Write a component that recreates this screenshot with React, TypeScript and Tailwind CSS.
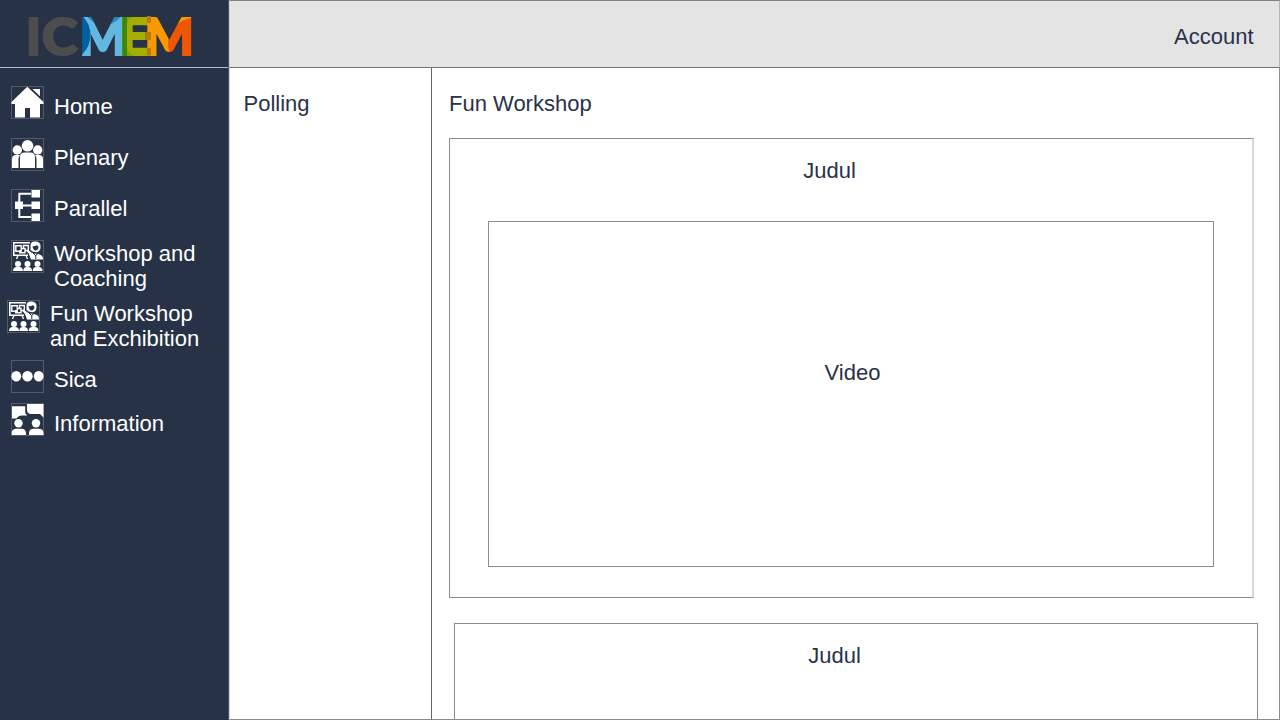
import type { ReactNode } from "react";

function Logo() {
  return (
    <svg width="228" height="67" viewBox="0 0 228 67" className="block" fontFamily="Lato, sans-serif" fontWeight="900" fontSize="52" strokeWidth="2.200" strokeLinejoin="miter">
      <defs>
        <pattern id="blue" patternUnits="userSpaceOnUse" x="0" y="0" width="228" height="67">
          <rect width="228" height="67" fill="#62b8df" />
          <circle cx="104" cy="4" r="21" fill="#2784bd" />
          <circle cx="64" cy="35" r="26.500" fill="#0062a3" />
        </pattern>
        <pattern id="green" patternUnits="userSpaceOnUse" x="0" y="0" width="228" height="67">
          <rect width="228" height="67" fill="#a4ad00" />
          <rect x="121" width="6" height="67" fill="#3f8703" />
          <path d="M127 16h7q-7 3 -7 9zM127 56h7q-7-3-7-9z" fill="#78a510" />
        </pattern>
        <pattern id="orange" patternUnits="userSpaceOnUse" x="0" y="0" width="228" height="67">
          <rect width="228" height="67" fill="#fa9800" />
          <circle cx="194" cy="44" r="26" fill="#ef5600" />
        </pattern>
      </defs>
      <text x="26" y="54.500" textLength="15" lengthAdjust="spacingAndGlyphs" fill="#4d4d4d" stroke="#4d4d4d">I</text>
      <text x="42" y="54.500" textLength="35.500" lengthAdjust="spacingAndGlyphs" fill="#4d4d4d" stroke="#4d4d4d">C</text>
      <text x="79.500" y="54.500" textLength="46.500" lengthAdjust="spacingAndGlyphs" fill="url(#blue)" stroke="url(#blue)">M</text>
      <text x="119.200" y="54.500" textLength="31" lengthAdjust="spacingAndGlyphs" fill="url(#green)" stroke="url(#green)">E</text>
      <text x="144.500" y="54.500" textLength="49.500" lengthAdjust="spacingAndGlyphs" fill="url(#orange)" stroke="url(#orange)">M</text>
      <path d="M147 16h4v7h-4zM146 32h5v8h-5zM147 48h4v7.500h-4z" fill="#b87a00" />
    </svg>
  );
}

function Icon({ children }: { children: ReactNode }) {
  return (
    <svg width="33" height="33" viewBox="0 0 33 33" className="block shrink-0" fill="#fff">
      <rect x=".5" y=".5" width="32" height="32" fill="none" stroke="#555c69" />
      {children}
    </svg>
  );
}

function HomeIcon() {
  return (
    <Icon>
      <path d="M16.300 .8 32.500 16v2H29v13.500H19V22h-5v9.500H4V18H.5v-2z" />
      <path d="M21.500 3H29v7.300z" />
    </Icon>
  );
}

function PeopleIcon() {
  return (
    <Icon>
      <circle cx="6.300" cy="12" r="4.700" />
      <circle cx="26.700" cy="12" r="4.700" />
      <path d="M1 30V21q0-4 4-4h4q-1.500 2-1.500 4v9zM32 30V21q0-4-4-4h-4q1.500 2 1.500 4v9z" />
      <circle cx="16.500" cy="7.800" r="5.800" />
      <path d="M9 30V19q0-4.500 4.500-4.500h6q4.500 0 4.500 4.500v11z" />
    </Icon>
  );
}

function TreeIcon() {
  return (
    <Icon>
      <path d="M20 4.800H8.300V28H20M12 16.500h9" fill="none" stroke="#fff" strokeWidth="2" />
      <path d="M20.500 1H29v7.500h-8.500zM20.500 12.500H29V20h-8.500zM20.500 24.500H29V32h-8.500zM4 12.500h8V20H4z" />
    </Icon>
  );
}

function WorkshopIcon() {
  return (
    <Icon>
      <path d="M2 2h17v1.600H3.600v10.800H17V16H2z" />
      <path d="M4.800 5.800h5.400v5.400H4.800zM10 8.500h4v4.200H8.700V10M12.500 5.500h4.800v5H14V8.500h-1.500z" fill="none" stroke="#fff" strokeWidth="1.400" />
      <path d="M7 15.500 5.500 19M15 15.500l1.500 3.500" stroke="#fff" strokeWidth="1.300" />
      <path d="M19.500 10V5.500q0-4 4.500-4 5.500 0 5.500 4.500v2q-.4 4-4.500 4.300-4-.3-5.500-2.300z" />
      <path d="M21.500 6.200q3 .2 4.500-1.200l1.500 2q-.3 3.300-3 3.500-2.300-.2-3-4.300z" fill="#273247" />
      <path d="M18 14 15 10.500l1.500-1 4 3 3 1.300h3l3.800 1.500q1.700 1 1.700 4.200H20z" />
      <path d="m22 13 2.600 2.500L27.500 13M24.800 15v4" stroke="#273247" strokeWidth="1" fill="none" />
      <circle cx="7" cy="24" r="3" />
      <circle cx="16.500" cy="24" r="3" />
      <circle cx="26.500" cy="24" r="3" />
      <path d="M2 31q0-4 4-4h2q4 0 4 4zM12.300 31q0-4 3.700-4h1q4 0 4 4zM21.700 31q0-4 3.800-4h2q4 0 4 4z" />
    </Icon>
  );
}

function DotsIcon() {
  return (
    <Icon>
      <ellipse cx="5.300" cy="16.200" rx="4.900" ry="5.200" />
      <ellipse cx="16.500" cy="16.200" rx="5.200" ry="5.200" />
      <ellipse cx="27.700" cy="16.200" rx="4.900" ry="5.200" />
    </Icon>
  );
}

function DiscussionIcon() {
  return (
    <Icon>
      <path d="M1 3.300h13.200V10l2 2.500H11q-3.500 0-5.500 3H1z" />
      <path d="M16 1h16.500v13.500L29 11h-9.500Q16 10.500 16 7z" />
      <circle cx="7.500" cy="20.300" r="4.200" />
      <circle cx="25" cy="20.300" r="4.200" />
      <path d="M.8 32v-2.500q.5-3.700 4.200-3.700h5.500q4 .2 4.500 4V32zM18 32v-2.200q.5-3.800 4.500-4H28q4 .2 4.500 4V32z" />
    </Icon>
  );
}

const items = [
  { icon: <HomeIcon />, label: "Home", row: "h-[52px] pl-[11px]", text: "pt-[8px]" },
  { icon: <PeopleIcon />, label: "Plenary", row: "h-[51px] pl-[11px]", text: "pt-[7px]" },
  { icon: <TreeIcon />, label: "Parallel", row: "h-[51px] pl-[11px]", text: "pt-[7px]" },
  { icon: <WorkshopIcon />, label: "Workshop and Coaching", row: "h-[60px] pl-[11px]", text: "w-[160px] pt-px" },
  { icon: <WorkshopIcon />, label: "Fun Workshop and Exchibition", row: "h-[60px] pl-[7px]", text: "w-[160px] pt-px" },
  { icon: <DotsIcon />, label: "Sica", row: "h-[43px] pl-[11px]", text: "pt-[7px]" },
  { icon: <DiscussionIcon />, label: "Information", row: "h-[44px] pl-[11px]", text: "pt-[8px]" },
];

export default function App() {
  return (
    <div className="flex h-[720px] w-[1280px] overflow-hidden bg-white font-['Liberation_Sans',Arial,sans-serif] text-[22px] leading-[25px] text-[#29324a]">
      <aside className="w-[229px] shrink-0 border-r border-[#4b5466] bg-[#273247] text-white">
        <div className="h-[68px] border-b border-[#b9bdc5]">
          <Logo />
        </div>
        <nav className="pt-[18px]">
          {items.map((item) => (
            <a key={item.label} className={`flex items-start gap-[10px] ${item.row}`}>
              {item.icon}
              <span className={item.text}>{item.label}</span>
            </a>
          ))}
        </nav>
      </aside>

      <div className="flex min-w-0 flex-1 flex-col">
        <header className="flex h-[68px] shrink-0 justify-end border-t border-r border-b border-l border-t-[#808080] border-r-[#b5b5b5] border-b-[#707070] border-l-[#d0d0d0] bg-[#e4e4e4] pt-[23px] pr-[25.5px]">
          Account
        </header>
        <div className="flex min-h-0 flex-1">
          <section className="w-[203px] shrink-0 border-r border-b border-l border-r-[#666] border-b-[#8c8c8c] border-l-[#d0d0d0] pt-[23px] pl-[13.5px]">
            Polling
          </section>
          <main className="flex min-w-0 flex-1 flex-col overflow-hidden border-r border-b border-[#8c8c8c] pt-[23px] pl-[17px]">
            <h1>Fun Workshop</h1>
            <article className="mt-[22px] h-[460px] w-[805px] shrink-0 border border-r-2 border-[#8c8c8c] border-r-[#d8d8d8] pt-[19px] pl-[38px]">
              <h2 className="w-[683px] text-center">Judul</h2>
              <div className="mt-[38px] flex h-[346px] w-[726px] justify-center border border-[#8c8c8c] pt-[138px] pl-[3px]">
                Video
              </div>
            </article>
            <article className="z-10 mt-[25px] -mb-px ml-[5px] h-[97px] w-[804px] shrink-0 border border-b-0 border-[#8c8c8c] bg-white pt-[19px] pl-[38px]">
              <h2 className="w-[683px] text-center">Judul</h2>
            </article>
          </main>
        </div>
      </div>
    </div>
  );
}
